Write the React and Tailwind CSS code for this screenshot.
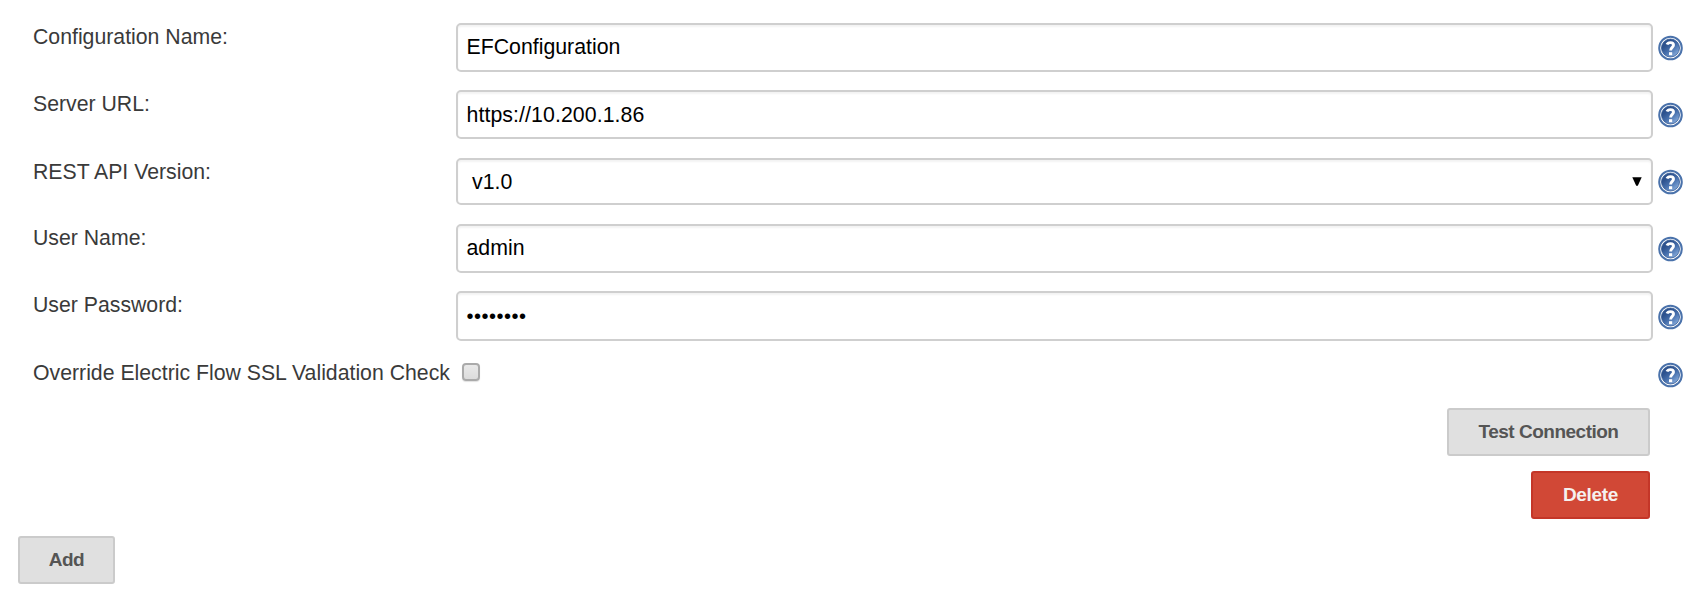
const fieldBox =
  "flex min-w-0 flex-1 items-center rounded-[5px] border-2 border-[#cfcfcf] bg-white text-[21.3px] leading-6 text-black shadow-[inset_0_2px_2px_rgba(0,0,0,0.05)]";

function HelpIcon({ className }) {
  return (
    <svg className={`h-[26px] w-[26px] shrink-0 ${className}`} viewBox="0 0 26 26" role="img" aria-label="Help">
      <defs>
        <linearGradient id="helpFill" x1="0.2" y1="0.1" x2="0.85" y2="0.9">
          <stop offset="0.2" stopColor="#2d528e" />
          <stop offset="0.55" stopColor="#4770ad" />
          <stop offset="1" stopColor="#86abdb" />
        </linearGradient>
      </defs>
      <circle cx="12.5" cy="13" r="11.3" fill="#fff" stroke="#4a72ab" strokeWidth="2" />
      <circle cx="12.5" cy="13" r="9" fill="url(#helpFill)" stroke="#2f5592" strokeWidth="0.8" />
      <path d="M9 9.6C9.6 8 10.8 7.6 12.4 7.6C14.4 7.6 15.5 8.6 15.5 10.1C15.5 12.5 12.6 12.3 12.6 15.6" fill="none" stroke="#fff" strokeWidth="2.9" />
      <rect x="11" y="17.2" width="3.2" height="3" fill="#fff" />
    </svg>
  );
}

function Row({ label, className, labelClass = "pt-[2px]", iconClass, children }) {
  return (
    <div className={`flex items-start ${className}`}>
      <div className={`w-[423px] shrink-0 whitespace-nowrap text-[21.25px] leading-6 text-[#3a3a3a] ${labelClass}`}>
        <span>{label}</span>
      </div>
      {children}
      <HelpIcon className={iconClass} />
    </div>
  );
}

export default function App() {
  return (
    <main className="flex h-[596px] flex-col bg-white pt-[23px] font-['Liberation_Sans',Arial,sans-serif]">
      <div className="flex flex-col pl-[33px] pr-[12px]">
        <Row label="Configuration Name:" className="h-[67px]" iconClass="ml-[5px] mt-[12px]">
          <div className={`${fieldBox} h-[49px] pb-[2px] pl-[8.5px]`}>EFConfiguration</div>
        </Row>
        <Row label="Server URL:" className="h-[68px]" iconClass="ml-[5px] mt-[12px]">
          <div className={`${fieldBox} h-[49px] pl-[8.5px]`}>
            <span className="tracking-[0.08px]">https://10.200.1.86</span>
          </div>
        </Row>
        <Row label="REST API Version:" className="h-[66px]" iconClass="ml-[5px] mt-[11px]">
          <div className={`${fieldBox} h-[47px] justify-between pl-[14px] pr-[9px]`}>
            <span>v1.0</span>
            <svg className="h-[9px] w-[10px]" viewBox="0 0 10 9" aria-hidden="true">
              <path d="M0.3 0.3H9.7L5.8 8.7H4.2Z" fill="#000" />
            </svg>
          </div>
        </Row>
        <Row label="User Name:" className="h-[67px]" iconClass="ml-[5px] mt-[12px]">
          <div className={`${fieldBox} h-[49px] pb-[2px] pl-[8.5px]`}>admin</div>
        </Row>
        <Row label="User Password:" className="h-[67px]" iconClass="ml-[5px] mt-[13px]">
          <div className={`${fieldBox} h-[50px] pl-[8.5px]`}>
            <span className="text-[20px] tracking-[0.5px]">••••••••</span>
          </div>
        </Row>
        <Row
          label="Override Electric Flow SSL Validation Check"
          className="h-[50px]"
          labelClass="pt-[3px]"
          iconClass="mt-[4px]"
        >
          <div className="flex flex-1 pl-[6px] pt-[5px]">
            <div className="h-[18px] w-[18px] rounded-[4px] border-2 border-[#aaa] bg-linear-to-b from-[#e9e9e9] to-[#dcdcdc] shadow-[0_1px_1px_rgba(0,0,0,0.12)]" />
          </div>
        </Row>
      </div>
      <div className="flex flex-col items-end gap-[15px] pr-[46px] text-[19px] font-bold leading-6">
        <button className="h-[48px] w-[203px] rounded-[3px] border-2 border-[#cbcbcb] bg-[#e0e0e0] text-[#555]">
          <span className="whitespace-nowrap tracking-[-0.5px]">Test Connection</span>
        </button>
        <button className="h-[48px] w-[119px] rounded-[3px] border-2 border-[#c43628] bg-[#d14836] text-[#f5f0ef]">
          <span className="tracking-[-0.3px]">Delete</span>
        </button>
      </div>
      <button className="ml-[18px] mt-[17px] h-[48px] w-[97px] rounded-[3px] border-2 border-[#cbcbcb] bg-[#e0e0e0] text-[19px] font-bold leading-6 text-[#555]">
        <span className="tracking-[-0.5px]">Add</span>
      </button>
    </main>
  );
}
